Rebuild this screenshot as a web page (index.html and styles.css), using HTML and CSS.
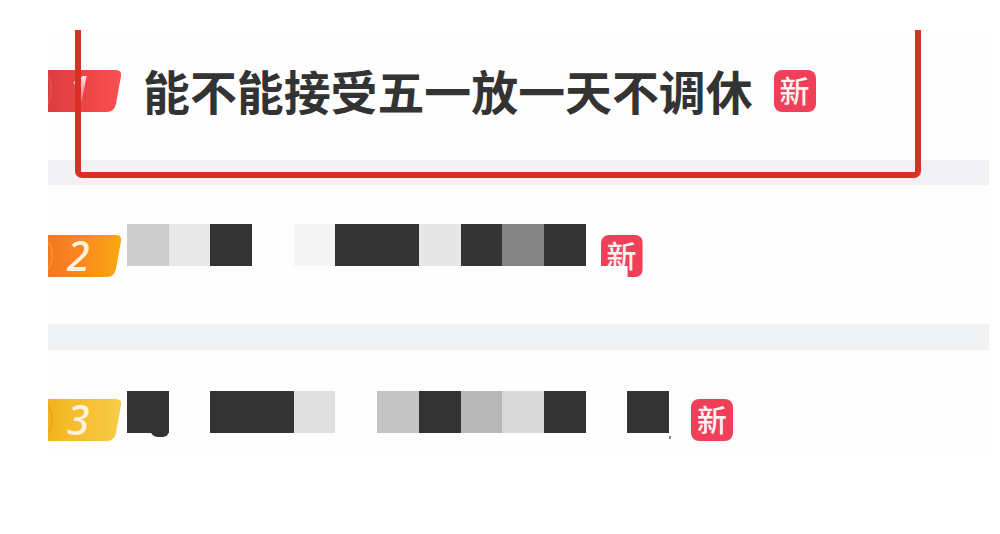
FILE: index.html
```html
<!DOCTYPE html>
<html lang="zh-CN">
<head>
    <meta charset="UTF-8">
    <meta name="viewport" content="width=device-width, initial-scale=1.0">
    <title>热搜榜</title>
    <link rel="stylesheet" href="styles.css">
</head>
<body>
    <div class="hot-list">
        <div class="row row-first">
            <div class="rank">
                <svg class="rank-bg" viewBox="0 0 74 44">
                    <defs>
                        <linearGradient id="red" x1="0" x2="1"><stop offset="0" stop-color="#dc3d40"/><stop offset="0.6" stop-color="#ef4648"/><stop offset="1" stop-color="#fb5052"/></linearGradient>
                    </defs>
                    <path fill="url(#red)" d="M0 1H68Q74 1 73 7L68 35Q66 43 59 43H0Z"/>
                    <path fill="none" stroke="#ee6a4b" stroke-width="2" opacity="0.4" d="M0 8Q4 12 3 21Q3 30 0 35"/>
                </svg>
                <span class="rank-num faded">1</span>
            </div>
            <div class="title">能不能接受五一放一天不调休</div>
            <div class="tag">新</div>
            <div class="highlight"></div>
        </div>
        <div class="row row-second">
            <div class="rank">
                <svg class="rank-bg" viewBox="0 0 74 44">
                    <defs>
                        <linearGradient id="orange" x1="0" x2="1"><stop offset="0" stop-color="#f47725"/><stop offset="0.4" stop-color="#fb8520"/><stop offset="1" stop-color="#fba70e"/></linearGradient>
                    </defs>
                    <path fill="url(#orange)" d="M0 1H68Q74 1 73 7L68 35Q66 43 59 43H0Z"/>
                    <path fill="none" stroke="#f9a21b" stroke-width="2" opacity="0.6" d="M0 8Q4 12 4 21Q4 30 0 35"/>
                </svg>
                <span class="rank-num">2</span>
            </div>
            <div class="mosaic">
                <i class="c-cd"></i><i class="c-e8"></i><i class="c-33"></i><i></i>
                <i class="c-f5"></i><i class="c-33"></i><i class="c-33"></i><i class="c-e6"></i>
                <i class="c-33"></i><i class="c-83"></i><i class="c-33"></i>
            </div>
            <div class="tag tag-cut">新</div>
        </div>
        <div class="row row-third">
            <div class="rank">
                <svg class="rank-bg" viewBox="0 0 74 44">
                    <defs>
                        <linearGradient id="yellow" x1="0" x2="1"><stop offset="0" stop-color="#f3b31b"/><stop offset="0.4" stop-color="#f5be2e"/><stop offset="1" stop-color="#f8cb48"/></linearGradient>
                    </defs>
                    <path fill="url(#yellow)" d="M0 1H68Q74 1 73 7L68 35Q66 43 59 43H0Z"/>
                    <path fill="none" stroke="#dfa11c" stroke-width="2" opacity="0.6" d="M0 8Q4 12 4 21Q4 30 0 35"/>
                </svg>
                <span class="rank-num">3</span>
            </div>
            <div class="mosaic">
                <i class="c-33 blob"></i><i></i><i class="c-33"></i><i class="c-33"></i>
                <i class="c-e0"></i><i></i><i class="c-c4"></i><i class="c-33"></i>
                <i class="c-b8"></i><i class="c-d8"></i><i class="c-33"></i><i></i><i class="c-33 speck"></i>
            </div>
            <div class="tag">新</div>
        </div>
    </div>
</body>
</html>
```

FILE: styles.css
```css
body {
    margin: 0;
    background-color: #fff;
    font-family: "Noto Sans CJK SC", "Noto Sans", sans-serif;
    overflow: hidden;
}
.hot-list {
    width: 941px;
    margin: 30px 0 0 48px;
}
.row {
    position: relative;
    display: flex;
    align-items: flex-start;
    box-sizing: border-box;
    background-color: #fefefe;
}
.row-first {
    height: 155px;
    padding-top: 39px;
    border-bottom: 25px solid #f2f2f4;
}
.row-second {
    height: 165px;
    padding-top: 39px;
    border-bottom: 26px solid #f1f2f4;
}
.row-third {
    height: 108px;
    padding-top: 41px;
}
.rank {
    position: relative;
    flex: none;
    width: 74px;
    height: 44px;
}
.row-second .rank {
    margin-top: 10px;
}
.row-third .rank {
    margin-top: 7px;
}
.rank-bg {
    display: block;
    width: 74px;
    height: 44px;
}
.rank-num {
    position: absolute;
    top: 0;
    left: 19px;
    font: italic 500 41px/42px "Noto Sans", sans-serif;
    color: #fff3df;
}
.faded {
    left: 20px;
    color: transparent;
    background: linear-gradient(#ffe4e0 15%, #f66 85%);
    -webkit-background-clip: text;
    background-clip: text;
}
.title {
    margin-left: 21px;
    font-size: 46.9px;
    line-height: 42px;
    font-weight: 700;
    color: #333;
    white-space: nowrap;
}
.tag {
    flex: none;
    width: 42px;
    height: 42px;
    border-radius: 8px;
    background-color: #f03f58;
    color: #fff0f2;
    font-size: 30px;
    line-height: 39px;
    font-weight: 500;
    text-align: center;
}
.row-first .tag {
    margin: 1px 0 0 21px;
}
.row-second .tag {
    margin: 11px 0 0 15px;
}
.row-third .tag {
    margin: 8px 0 0 22px;
}
.tag-cut {
    clip-path: polygon(0 0, 100% 0, 100% 100%, 27px 100%, 27px 31px, 0 31px);
}
.mosaic {
    display: grid;
    grid-auto-flow: column;
    grid-auto-columns: 41.7px;
    height: 42px;
    margin-left: 5px;
}
.mosaic i {
    position: relative;
}
.c-33 { background-color: #333; }
.c-83 { background-color: #838383; }
.c-b8 { background-color: #b8b8b8; }
.c-c4 { background-color: #c4c4c4; }
.c-cd { background-color: #cdcdcd; }
.c-d8 { background-color: #d8d8d8; }
.c-e0 { background-color: #e0e0e0; }
.c-e6 { background-color: #e6e6e6; }
.c-e8 { background-color: #e8e8e8; }
.c-f5 { background-color: #f5f5f5; }
.blob::after {
    content: "";
    position: absolute;
    right: 0;
    bottom: -4px;
    width: 19px;
    height: 8px;
    border-radius: 0 0 7px 9px;
    background-color: #333;
}
.speck::after {
    content: "";
    position: absolute;
    right: -2px;
    bottom: -6px;
    width: 2px;
    height: 3px;
    background-color: #888;
}
.highlight {
    position: absolute;
    top: 0;
    left: 27px;
    box-sizing: border-box;
    width: 846px;
    height: 148px;
    border: 6px solid #d93026;
    border-top: none;
    border-radius: 0 0 7px 7px;
}
```
